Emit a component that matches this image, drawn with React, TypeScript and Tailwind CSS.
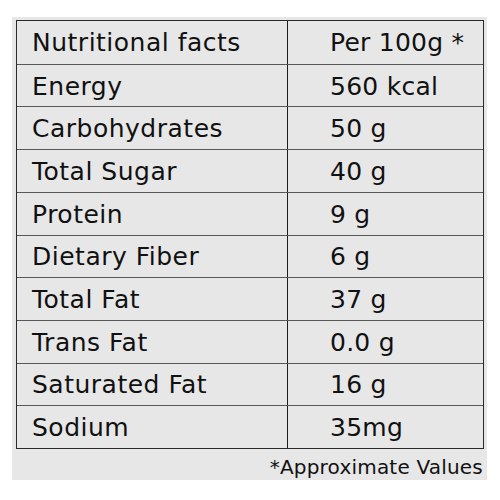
import React from "react";

const rows: [string, string][] = [
  ["Nutritional facts", "Per 100g *"],
  ["Energy", "560 kcal"],
  ["Carbohydrates", "50 g"],
  ["Total Sugar", "40 g"],
  ["Protein", "9 g"],
  ["Dietary Fiber", "6 g"],
  ["Total Fat", "37 g"],
  ["Trans Fat", "0.0 g"],
  ["Saturated Fat", "16 g"],
  ["Sodium", "35mg"],
];

export default function App() {
  return (
    <div className="w-[500px] h-[500px] bg-white pt-[17px] pl-[12px]" style={{ fontFamily: '"DejaVu Sans", sans-serif' }}>
      <div className="w-[475px] h-[463px] bg-[#e7e7e8] pt-[3px] pl-[4px] pr-[3px] flex flex-col">
        <div className="w-[468px] h-[429px] border-[1.5px] border-[#2a2a2a] grid grid-rows-[repeat(10,minmax(0,1fr))]">
          {rows.map(([a, b], i) => (
            <div
              key={i}
              className={`grid grid-cols-[271px_1fr] ${i > 0 ? "border-t-[1.5px] border-[#5a5758]" : ""}`}
            >
              <div className="flex items-center pl-[15px] pt-[1px] text-[25px] tracking-[0.02em] text-[#111111] border-r-[1.5px] border-[#1e1e1e] leading-none">
                {a}
              </div>
              <div className="flex items-center pl-[42px] pt-[1px] text-[25px] tracking-[0.01em] text-[#111111] leading-none">
                {b}
              </div>
            </div>
          ))}
        </div>
        <div className="flex justify-end pr-[1px] pt-[8px] text-[20px] tracking-[0.01em] text-[#111111] leading-none">
          *Approximate Values
        </div>
      </div>
    </div>
  );
}
